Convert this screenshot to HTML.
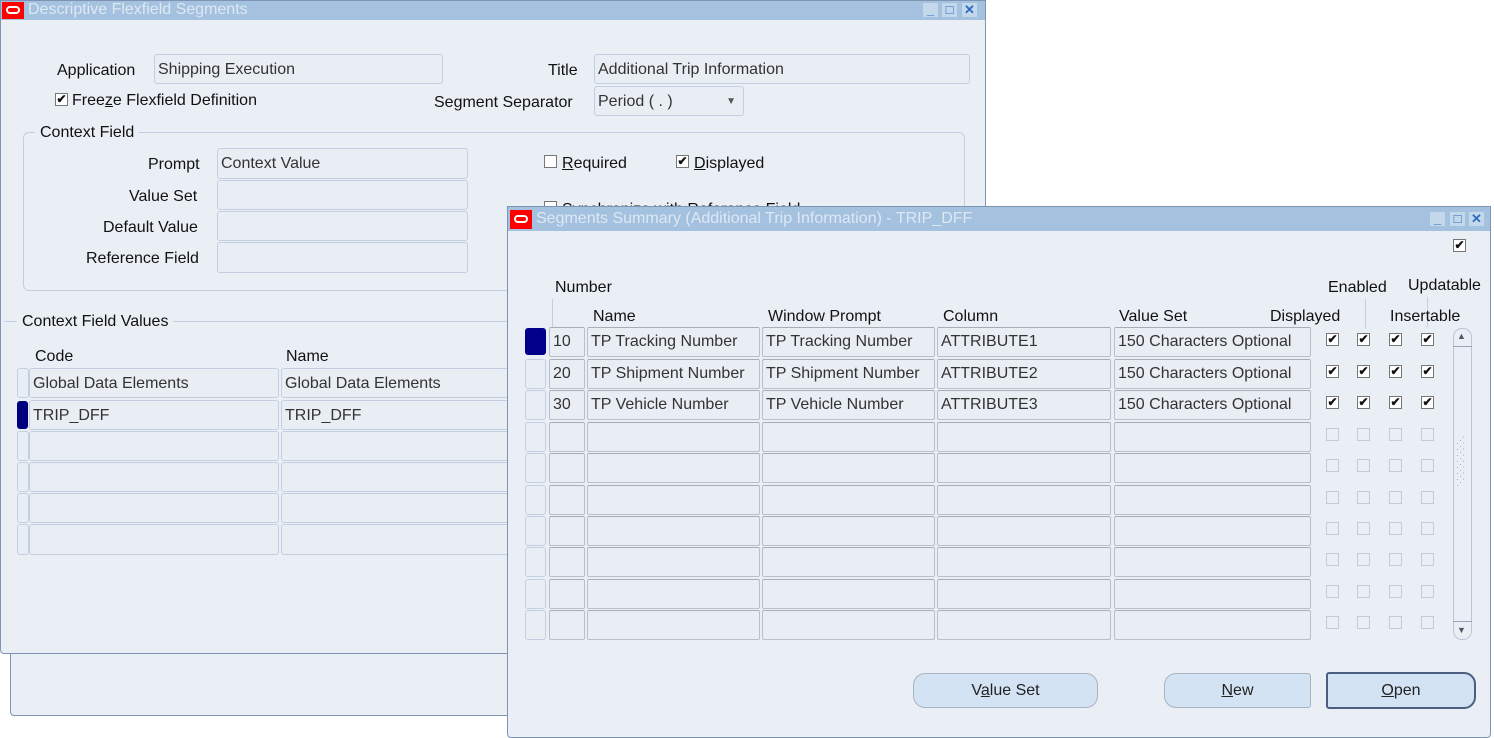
<!DOCTYPE html>
<html><head><meta charset="utf-8"><style>
*{box-sizing:border-box;margin:0;padding:0}
body{width:1494px;height:738px;background:#fff;position:relative;overflow:hidden;font-family:"Liberation Sans",Arial,sans-serif;font-size:16px;color:#111}
.a{position:absolute}
.win{position:absolute;background:#eaeef5;border:1px solid #7f93b3}
.tb{position:absolute;left:0;right:0;top:0;background:#a4c2df;color:#dde8f3;font-size:16px;white-space:nowrap;overflow:hidden}
.logo{position:absolute;left:1px;top:1px;width:22px;background:#f00}
.logo i{position:absolute;left:4px;top:5px;width:14px;height:8px;border:2px solid #fff;border-radius:5px}
.f{position:absolute;background:#e9edf4;border:1px solid #c3cfe0;border-radius:3px;padding-left:3px;color:#333;white-space:nowrap;overflow:hidden;line-height:29px}
.g{position:absolute;background:#e9edf4;border:1px solid #b9c0cc;border-top-color:#a8adb6;border-radius:2px;padding-left:3px;color:#333;white-space:nowrap;overflow:hidden;line-height:28px}
.l{position:absolute;white-space:nowrap}
.cb{position:absolute;width:13px;height:13px;border:1px solid #777;background:#fff;font-size:12px;line-height:11px;text-align:center;font-weight:bold}
.cbe{position:absolute;width:13px;height:13px;border:1px solid #c8ccd2;background:#eaeef5}
.ind{position:absolute;border:1px solid #c3cfe0;border-radius:3px;background:#e9edf4}
.btn{position:absolute;height:35px;border:1px solid #a9b3c0;border-radius:12px;background:#d3e3f3;text-align:center;line-height:33px;color:#222}
.wb{position:absolute;width:15px;height:14px;background:#c4d8ec;color:#2d6cc0;font-size:13px;line-height:14px;text-align:center;font-weight:bold}
</style></head><body>

<div class="a" style="left:10px;top:650px;width:500px;height:66px;border:1px solid #7f93b3;border-top:none;background:#eaeef5;border-radius:0 0 0 4px"></div>

<div class="win" style="left:0;top:0;width:986px;height:654px;border-radius:0 0 4px 4px">
<div class="tb" style="height:19px;padding-left:27px;line-height:18px">Descriptive Flexfield Segments</div>
<div class="logo" style="height:17px"><i style="top:4px"></i></div>
<div class="wb" style="left:922px;top:2px">_</div><div class="wb" style="left:941px;top:2px">□</div><div class="wb" style="left:961px;top:2px">✕</div>

<div class="l" style="left:56px;top:61px">Application</div>
<div class="f" style="left:153px;top:53px;width:289px;height:30px">Shipping Execution</div>
<div class="l" style="left:547px;top:61px">Title</div>
<div class="f" style="left:593px;top:53px;width:376px;height:30px">Additional Trip Information</div>
<div class="cb" style="left:54px;top:92px">✔</div>
<div class="l" style="left:71px;top:91px">Free<u>z</u>e Flexfield Definition</div>
<div class="l" style="left:433px;top:93px">Segment Separator</div>
<div class="f" style="left:593px;top:85px;width:150px;height:30px">Period ( . )<span style="position:absolute;right:7px;top:0;font-size:10px;color:#555">▼</span></div>

<div class="a" style="left:22px;top:131px;width:942px;height:159px;border:1px solid #c3cfe0;border-radius:6px"></div>
<div class="l" style="left:34px;top:123px;background:#eaeef5;padding:0 5px">Context Field</div>
<div class="l" style="left:147px;top:155px">Prompt</div>
<div class="l" style="left:128px;top:187px">Value Set</div>
<div class="l" style="left:102px;top:218px">Default Value</div>
<div class="l" style="left:85px;top:249px">Reference Field</div>
<div class="f" style="left:216px;top:147px;width:251px;height:31px">Context Value</div>
<div class="f" style="left:216px;top:179px;width:251px;height:30px"></div>
<div class="f" style="left:216px;top:210px;width:251px;height:30px"></div>
<div class="f" style="left:216px;top:241px;width:251px;height:31px"></div>
<div class="cb" style="left:543px;top:154px"></div>
<div class="l" style="left:561px;top:154px"><u>R</u>equired</div>
<div class="cb" style="left:675px;top:154px">✔</div>
<div class="l" style="left:693px;top:154px"><u>D</u>isplayed</div>
<div class="cb" style="left:543px;top:200px"></div>
<div class="l" style="left:561px;top:200px">Synchronize with Reference Field</div>

<div class="a" style="left:3px;top:320px;width:982px;height:1px;background:#c3cfe0"></div>
<div class="l" style="left:16px;top:312px;background:#eaeef5;padding:0 5px">Context Field Values</div>
<div class="l" style="left:34px;top:347px">Code</div>
<div class="l" style="left:285px;top:347px">Name</div>

<div class="ind" style="left:16px;top:367px;width:12px;height:30px"></div>
<div class="f" style="left:28px;top:367px;width:250px;height:30px">Global Data Elements</div>
<div class="f" style="left:280px;top:367px;width:240px;height:30px">Global Data Elements</div>
<div class="ind" style="left:16px;top:400px;width:11px;height:28px;background:#00007f;border-color:#00007f"></div>
<div class="f" style="left:28px;top:399px;width:250px;height:30px">TRIP_DFF</div>
<div class="f" style="left:280px;top:399px;width:240px;height:30px">TRIP_DFF</div>
<div class="ind" style="left:16px;top:430px;width:12px;height:30px"></div><div class="f" style="left:28px;top:430px;width:250px;height:30px"></div><div class="f" style="left:280px;top:430px;width:240px;height:30px"></div>
<div class="ind" style="left:16px;top:461px;width:12px;height:30px"></div><div class="f" style="left:28px;top:461px;width:250px;height:30px"></div><div class="f" style="left:280px;top:461px;width:240px;height:30px"></div>
<div class="ind" style="left:16px;top:492px;width:12px;height:30px"></div><div class="f" style="left:28px;top:492px;width:250px;height:30px"></div><div class="f" style="left:280px;top:492px;width:240px;height:30px"></div>
<div class="ind" style="left:16px;top:523px;width:12px;height:31px"></div><div class="f" style="left:28px;top:523px;width:250px;height:31px"></div><div class="f" style="left:280px;top:523px;width:240px;height:31px"></div>
</div>

<div class="win" style="left:507px;top:206px;width:984px;height:532px;border-radius:0 0 4px 4px">
<div class="tb" style="height:24px;padding-left:28px;line-height:24px">Segments Summary (Additional Trip Information) - TRIP_DFF</div>
<div class="logo" style="left:2px;top:3px;height:19px"><i></i></div>
<div class="wb" style="left:922px;top:5px">_</div><div class="wb" style="left:942px;top:5px">□</div><div class="wb" style="left:961px;top:5px">✕</div>
<div class="cb" style="left:945px;top:32px">✔</div>

<div class="l" style="left:47px;top:72px">Number</div>
<div class="a" style="left:44px;top:92px;width:1px;height:28px;background:#c3cfe0"></div>
<div class="l" style="left:85px;top:101px">Name</div>
<div class="l" style="left:260px;top:101px">Window Prompt</div>
<div class="l" style="left:435px;top:101px">Column</div>
<div class="l" style="left:611px;top:101px">Value Set</div>
<div class="l" style="left:762px;top:101px">Displayed</div>
<div class="l" style="left:820px;top:72px">Enabled</div>
<div class="a" style="left:857px;top:92px;width:1px;height:30px;background:#c3cfe0"></div>
<div class="l" style="left:900px;top:70px">Updatable</div>
<div class="a" style="left:919px;top:90px;width:1px;height:30px;background:#c3cfe0"></div>
<div class="l" style="left:882px;top:101px">Insertable</div>

<div class="a" style="left:945px;top:121px;width:19px;height:312px;border:1px solid #b9c6d8;border-radius:9px;background:#eaeef5"></div>
<div class="a" style="left:945px;top:139px;width:19px;height:1px;background:#9aa6b8"></div>
<div class="a" style="left:945px;top:414px;width:19px;height:1px;background:#9aa6b8"></div>
<div class="l" style="left:949px;top:124px;font-size:9px;color:#556">▲</div>
<div class="l" style="left:949px;top:418px;font-size:9px;color:#556">▼</div>
<div class="l" style="left:948px;top:230px;font-size:9px;color:#aab;line-height:6px">⋰<br>⋰<br>⋰<br>⋰<br>⋰<br>⋰<br>⋰<br>⋰</div>
</div>

<div class="ind" style="left:525px;top:328px;width:21px;height:27px;background:#00008b;border-color:#00008b;border-radius:3px"></div>
<div class="g" style="left:549px;top:327px;width:36px;height:30px">10</div><div class="g" style="left:587px;top:327px;width:173px;height:30px">TP Tracking Number</div><div class="g" style="left:762px;top:327px;width:173px;height:30px">TP Tracking Number</div><div class="g" style="left:937px;top:327px;width:174px;height:30px">ATTRIBUTE1</div><div class="g" style="left:1114px;top:327px;width:197px;height:30px">150 Characters Optional</div>
<div class="cb" style="left:1326px;top:333px">✔</div><div class="cb" style="left:1357px;top:333px">✔</div><div class="cb" style="left:1389px;top:333px">✔</div><div class="cb" style="left:1421px;top:333px">✔</div>

<div class="ind" style="left:525px;top:359px;width:21px;height:30px"></div>
<div class="g" style="left:549px;top:359px;width:36px;height:30px">20</div><div class="g" style="left:587px;top:359px;width:173px;height:30px">TP Shipment Number</div><div class="g" style="left:762px;top:359px;width:173px;height:30px">TP Shipment Number</div><div class="g" style="left:937px;top:359px;width:174px;height:30px">ATTRIBUTE2</div><div class="g" style="left:1114px;top:359px;width:197px;height:30px">150 Characters Optional</div>
<div class="cb" style="left:1326px;top:365px">✔</div><div class="cb" style="left:1357px;top:365px">✔</div><div class="cb" style="left:1389px;top:365px">✔</div><div class="cb" style="left:1421px;top:365px">✔</div>

<div class="ind" style="left:525px;top:390px;width:21px;height:30px"></div>
<div class="g" style="left:549px;top:390px;width:36px;height:30px">30</div><div class="g" style="left:587px;top:390px;width:173px;height:30px">TP Vehicle Number</div><div class="g" style="left:762px;top:390px;width:173px;height:30px">TP Vehicle Number</div><div class="g" style="left:937px;top:390px;width:174px;height:30px">ATTRIBUTE3</div><div class="g" style="left:1114px;top:390px;width:197px;height:30px">150 Characters Optional</div>
<div class="cb" style="left:1326px;top:396px">✔</div><div class="cb" style="left:1357px;top:396px">✔</div><div class="cb" style="left:1389px;top:396px">✔</div><div class="cb" style="left:1421px;top:396px">✔</div>

<div class="ind" style="left:525px;top:422px;width:21px;height:30px"></div><div class="g" style="left:549px;top:422px;width:36px;height:30px"></div><div class="g" style="left:587px;top:422px;width:173px;height:30px"></div><div class="g" style="left:762px;top:422px;width:173px;height:30px"></div><div class="g" style="left:937px;top:422px;width:174px;height:30px"></div><div class="g" style="left:1114px;top:422px;width:197px;height:30px"></div>
<div class="cbe" style="left:1326px;top:428px"></div><div class="cbe" style="left:1357px;top:428px"></div><div class="cbe" style="left:1389px;top:428px"></div><div class="cbe" style="left:1421px;top:428px"></div>

<div class="ind" style="left:525px;top:453px;width:21px;height:30px"></div><div class="g" style="left:549px;top:453px;width:36px;height:30px"></div><div class="g" style="left:587px;top:453px;width:173px;height:30px"></div><div class="g" style="left:762px;top:453px;width:173px;height:30px"></div><div class="g" style="left:937px;top:453px;width:174px;height:30px"></div><div class="g" style="left:1114px;top:453px;width:197px;height:30px"></div>
<div class="cbe" style="left:1326px;top:459px"></div><div class="cbe" style="left:1357px;top:459px"></div><div class="cbe" style="left:1389px;top:459px"></div><div class="cbe" style="left:1421px;top:459px"></div>

<div class="ind" style="left:525px;top:485px;width:21px;height:30px"></div><div class="g" style="left:549px;top:485px;width:36px;height:30px"></div><div class="g" style="left:587px;top:485px;width:173px;height:30px"></div><div class="g" style="left:762px;top:485px;width:173px;height:30px"></div><div class="g" style="left:937px;top:485px;width:174px;height:30px"></div><div class="g" style="left:1114px;top:485px;width:197px;height:30px"></div>
<div class="cbe" style="left:1326px;top:491px"></div><div class="cbe" style="left:1357px;top:491px"></div><div class="cbe" style="left:1389px;top:491px"></div><div class="cbe" style="left:1421px;top:491px"></div>

<div class="ind" style="left:525px;top:516px;width:21px;height:30px"></div><div class="g" style="left:549px;top:516px;width:36px;height:30px"></div><div class="g" style="left:587px;top:516px;width:173px;height:30px"></div><div class="g" style="left:762px;top:516px;width:173px;height:30px"></div><div class="g" style="left:937px;top:516px;width:174px;height:30px"></div><div class="g" style="left:1114px;top:516px;width:197px;height:30px"></div>
<div class="cbe" style="left:1326px;top:522px"></div><div class="cbe" style="left:1357px;top:522px"></div><div class="cbe" style="left:1389px;top:522px"></div><div class="cbe" style="left:1421px;top:522px"></div>

<div class="ind" style="left:525px;top:547px;width:21px;height:30px"></div><div class="g" style="left:549px;top:547px;width:36px;height:30px"></div><div class="g" style="left:587px;top:547px;width:173px;height:30px"></div><div class="g" style="left:762px;top:547px;width:173px;height:30px"></div><div class="g" style="left:937px;top:547px;width:174px;height:30px"></div><div class="g" style="left:1114px;top:547px;width:197px;height:30px"></div>
<div class="cbe" style="left:1326px;top:553px"></div><div class="cbe" style="left:1357px;top:553px"></div><div class="cbe" style="left:1389px;top:553px"></div><div class="cbe" style="left:1421px;top:553px"></div>

<div class="ind" style="left:525px;top:579px;width:21px;height:30px"></div><div class="g" style="left:549px;top:579px;width:36px;height:30px"></div><div class="g" style="left:587px;top:579px;width:173px;height:30px"></div><div class="g" style="left:762px;top:579px;width:173px;height:30px"></div><div class="g" style="left:937px;top:579px;width:174px;height:30px"></div><div class="g" style="left:1114px;top:579px;width:197px;height:30px"></div>
<div class="cbe" style="left:1326px;top:585px"></div><div class="cbe" style="left:1357px;top:585px"></div><div class="cbe" style="left:1389px;top:585px"></div><div class="cbe" style="left:1421px;top:585px"></div>

<div class="ind" style="left:525px;top:610px;width:21px;height:30px"></div><div class="g" style="left:549px;top:610px;width:36px;height:30px"></div><div class="g" style="left:587px;top:610px;width:173px;height:30px"></div><div class="g" style="left:762px;top:610px;width:173px;height:30px"></div><div class="g" style="left:937px;top:610px;width:174px;height:30px"></div><div class="g" style="left:1114px;top:610px;width:197px;height:30px"></div>
<div class="cbe" style="left:1326px;top:616px"></div><div class="cbe" style="left:1357px;top:616px"></div><div class="cbe" style="left:1389px;top:616px"></div><div class="cbe" style="left:1421px;top:616px"></div>

<div class="btn" style="left:913px;top:673px;width:185px">V<u>a</u>lue Set</div>
<div class="btn" style="left:1164px;top:673px;width:147px;border-radius:12px 3px 3px 12px"><u>N</u>ew</div>
<div class="btn" style="left:1326px;top:672px;width:150px;height:37px;border:2px solid #4a5f80;border-radius:3px 12px 12px 3px"><u>O</u>pen</div>
</body></html>
